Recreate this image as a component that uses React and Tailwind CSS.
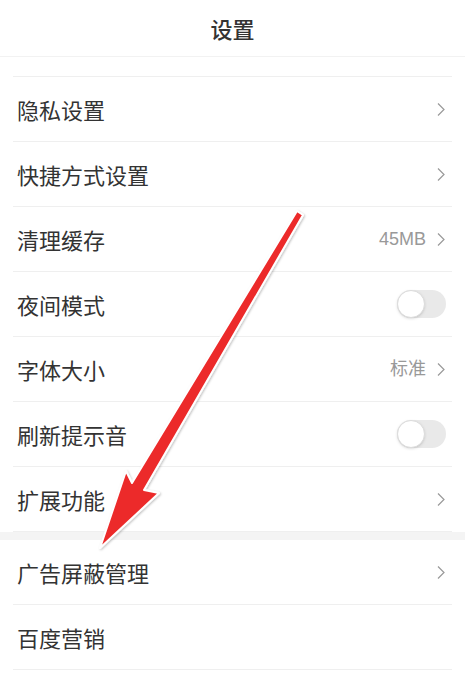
import React from 'react';

const rows = [
    { label: '隐私设置', type: 'link' },
    { label: '快捷方式设置', type: 'link' },
    { label: '清理缓存', type: 'link', value: '45MB' },
    { label: '夜间模式', type: 'toggle' },
    { label: '字体大小', type: 'link', value: '标准' },
    { label: '刷新提示音', type: 'toggle' },
    { label: '扩展功能', type: 'link' },
];

const moreRows = [
    { label: '广告屏蔽管理', type: 'link' },
    { label: '百度营销', type: 'none' },
];

const Chevron = () => (
    <svg width="10" height="15" viewBox="0 0 10 15" className="ml-[10px]">
        <path d="M2 1.5 L8 7.5 L2 13.5" fill="none" stroke="#999999" strokeWidth="1.2" />
    </svg>
);

const Toggle = () => (
    <div className="w-[49px] h-[28px] rounded-full bg-[#e9e9e9] flex items-center">
        <div className="w-[28px] h-[28px] rounded-full bg-white border border-[#dcdcdc] shadow-sm" />
    </div>
);

const Row = ({ label, type, value }) => (
    <div className="h-[65px] mx-[13px] border-b border-[#efefef] flex items-center justify-between pl-[4px] pr-[6px]">
        <span className="text-[22px] text-[#333]">{label}</span>
        <div className="flex items-center">
            {value && (
                <span className="text-[18px] text-[#999]" style={{ fontFamily: '"Liberation Sans", "Noto Sans CJK SC", sans-serif' }}>
                    {value}
                </span>
            )}
            {type === 'link' && <Chevron />}
            {type === 'toggle' && <Toggle />}
        </div>
    </div>
);

// red annotation arrow drawn over the list
const Arrow = () => (
    <svg className="absolute inset-0 pointer-events-none" width="465" height="681" viewBox="0 0 465 681">
        <defs>
            <filter id="sh" x="-20%" y="-20%" width="140%" height="140%">
                <feDropShadow dx="1" dy="1" stdDeviation="1.2" floodColor="#000" floodOpacity="0.25" />
            </filter>
        </defs>
        <polygon
            points="297,211 303,215 144,490 159,493 100,548 126,471 132,483"
            fill="#ec2a2a"
            stroke="#ffffff"
            strokeWidth="2"
            strokeLinejoin="round"
            filter="url(#sh)"
        />
    </svg>
);

export default function App() {
    return (
        <div
            className="relative w-[465px] h-[681px] bg-white overflow-hidden"
            style={{ fontFamily: '"Noto Sans CJK SC", "Noto Sans", sans-serif' }}
        >
            <div className="h-[57px] border-b border-[#f2f2f2] flex items-center justify-center">
                <span className="text-[22px] font-medium text-[#333]">设置</span>
            </div>
            <div className="h-[20px] mx-[13px] border-b border-[#efefef]" />
            {rows.map((r) => (
                <Row key={r.label} {...r} />
            ))}
            <div className="h-[8px] bg-[#f4f4f4]" />
            {moreRows.map((r) => (
                <Row key={r.label} {...r} />
            ))}
            <Arrow />
        </div>
    );
}
